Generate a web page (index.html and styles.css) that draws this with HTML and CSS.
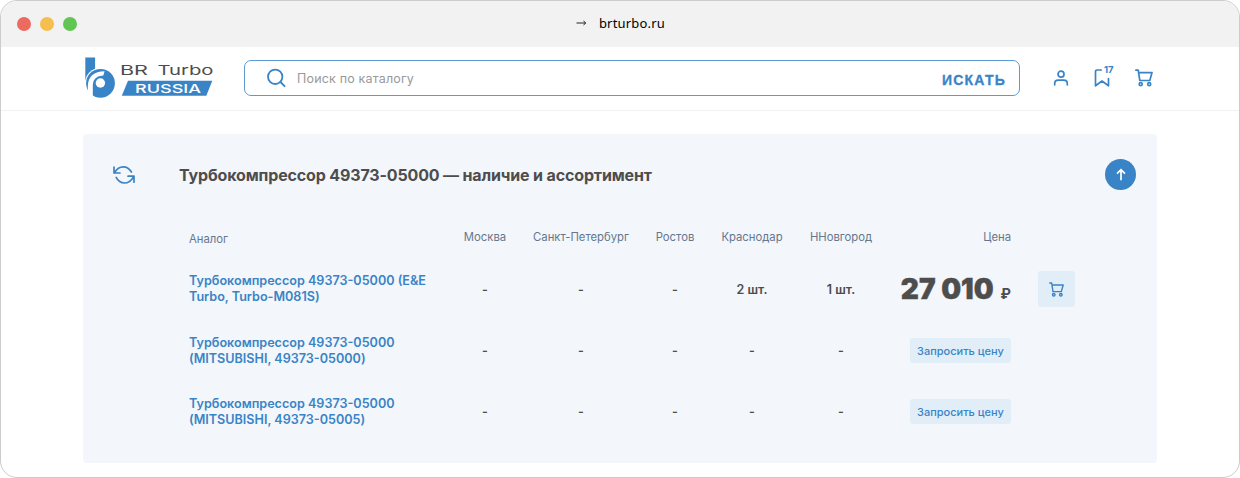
FILE: index.html
```html
<!DOCTYPE html>
<html lang="ru">
<head>
<meta charset="utf-8">
<title>BR Turbo Russia</title>
<link rel="stylesheet" href="styles.css">
</head>
<body>
<svg width="0" height="0" class="sprite" aria-hidden="true">
  <symbol id="cart" viewBox="0 0 18 18"><g fill="none" stroke="currentColor" stroke-width="1.7" stroke-linecap="round" stroke-linejoin="round"><path d="M.9 1.2h2.3l1.6 10.3h10L17 3.6H3.7"/><circle cx="5.700" cy="15.200" r="1.500"/><circle cx="14.200" cy="15.200" r="1.500"/></g></symbol>
</svg>
<div class="window">
  <div class="titlebar">
    <div class="lights"><i class="red"></i><i class="yellow"></i><i class="green"></i></div>
    <div class="address"><svg width="11" height="8" viewBox="0 0 11 8"><path d="M.5 4h9M7.500 2l2.300 2-2.300 2" fill="none" stroke="#222" stroke-width="1"/></svg><span>brturbo.ru</span></div>
  </div>
  <header class="header">
    <a class="logo">
      <svg width="130" height="42" viewBox="84 57 130 42">
        <path d="M85.300 57.500h9.800v20l-9.800 3z" fill="#3984c6"/>
        <circle cx="100.500" cy="83.300" r="15.500" fill="#fff"/>
        <circle cx="100.500" cy="83.300" r="14.400" fill="#3984c6"/>
        <path d="M87.800 98V86Q88.500 71.300 104.600 71.200L103.300 75.500Q93 76 92.800 85V98z" fill="#fff"/>
        <circle cx="100.400" cy="83" r="4.700" fill="#fff"/>
        <text class="logo-name" x="120" y="75.300" textLength="28" lengthAdjust="spacingAndGlyphs">BR</text>
        <text class="logo-name" x="157.500" y="75.300" textLength="56" lengthAdjust="spacingAndGlyphs">Turbo</text>
        <path d="M128 80.700h84.300l-6 15h-84.500z" fill="#3984c6"/>
        <text class="logo-country" x="135" y="92.900" textLength="66" lengthAdjust="spacingAndGlyphs">RUSSIA</text>
      </svg>
    </a>
    <div class="search">
      <svg width="20" height="20" viewBox="0 0 20 20"><g fill="none" stroke="#3984c6" stroke-width="1.800" stroke-linecap="round"><circle cx="8.200" cy="8.800" r="7.200"/><path d="M13.400 14l4.200 4.200"/></g></svg>
      <span class="placeholder">Поиск по каталогу</span>
      <span class="submit">ИСКАТЬ</span>
    </div>
    <nav class="actions">
      <svg class="user" width="16" height="16" viewBox="0 0 16 16"><g fill="none" stroke="currentColor" stroke-width="1.700" stroke-linecap="round"><circle cx="8" cy="4.200" r="3"/><path d="M1.700 14.800v-1.200q0-3.400 3.500-3.400h5.600q3.500 0 3.500 3.400v1.200"/></g></svg>
      <span class="saved"><svg width="16" height="18" viewBox="0 0 16 18"><path d="M7.200 1H3.200Q1.500 1 1.500 2.700V16.800L8 12l6.500 4.800V9.500" fill="none" stroke="currentColor" stroke-width="1.700" stroke-linecap="round" stroke-linejoin="round"/></svg><b>17</b></span>
      <svg class="cart" width="18" height="18"><use href="#cart"/></svg>
    </nav>
  </header>
  <main class="card">
    <div class="card-head">
      <svg width="22" height="20" viewBox="0 0 22 20"><g fill="none" stroke="#3984c6" stroke-width="1.700" stroke-linecap="round" stroke-linejoin="round"><path d="M1 2.200V8h6M1.500 7.500Q5 1.800 10.300 1.800Q15.500 1.800 18.400 7M21 17.200v-6h-6M20.500 11.800Q17 18 11.500 18Q6 18 3.200 12.400"/></g></svg>
      <h1>Турбокомпрессор 49373-05000 — наличие и ассортимент</h1>
      <span class="up"><svg width="12" height="14" viewBox="0 0 12 14"><path d="M6 12.300V2.200M2 5.600l4-3.900 4 3.900" fill="none" stroke="#fff" stroke-width="1.700"/></svg></span>
    </div>
    <div class="table">
      <div class="row head"><span class="first">Аналог</span><span>Москва</span><span>Санкт-Петербург</span><span>Ростов</span><span>Краснодар</span><span>ННовгород</span><span class="price">Цена</span></div>
      <div class="row"><a>Турбокомпрессор 49373-05000 (E&amp;E<br>Turbo, Turbo-M081S)</a><span>-</span><span>-</span><span>-</span><span>2 шт.</span><span>1 шт.</span><div class="price amount"><strong>27 010</strong><em>₽</em></div><div class="buy"><svg width="15" height="15"><use href="#cart"/></svg></div></div>
      <div class="row alt"><a>Турбокомпрессор 49373-05000<br>(MITSUBISHI, 49373-05000)</a><span>-</span><span>-</span><span>-</span><span>-</span><span>-</span><div class="price"><button>Запросить цену</button></div></div>
      <div class="row"><a>Турбокомпрессор 49373-05000<br>(MITSUBISHI, 49373-05005)</a><span>-</span><span>-</span><span>-</span><span>-</span><span>-</span><div class="price"><button>Запросить цену</button></div></div>
    </div>
  </main>
</div>
</body>
</html>
```
FILE: styles.css
```css
* { box-sizing: border-box; }
body { margin: 0; background: #fff; font-family: Inter, "Noto Sans", sans-serif; color: #4d4d4d; }
svg { display: block; flex: none; }
.sprite { display: none; }
.window { width: 1240px; height: 478px; border: 1px solid #ccc; border-radius: 17px; overflow: hidden; background: #fff; }
.titlebar { height: 46px; background: #f2f2f2; display: grid; grid-template-columns: 1fr auto 1fr; align-items: center; padding-left: 16px; }
.lights { display: flex; gap: 9px; padding-bottom: 1px; }
.lights i { width: 14px; height: 14px; border-radius: 50%; }
.red { background: #ed6a5e; }
.yellow { background: #f4bf4f; }
.green { background: #61c554; }
.address { display: flex; align-items: center; gap: 12px; font: 13px "Noto Sans", sans-serif; letter-spacing: .2px; color: #000; margin-right: 15px; padding-bottom: 2px; }
.header { height: 64px; border-bottom: 1px solid #f0f1f3; display: flex; align-items: center; padding-left: 83px; }
.logo { width: 160px; margin-bottom: 1px; }
.logo-name { font: 400 13.500px Inter, sans-serif; fill: #4d4d4d; }
.logo-country { font: 500 12px Inter, sans-serif; fill: #fff; }
.search { width: 776px; height: 36px; border: 1px solid #5c9bd2; border-radius: 7px; display: flex; align-items: center; padding: 0 14px 0 22px; margin-bottom: 1px; }
.placeholder { font-size: 12.500px; letter-spacing: .18px; color: #999; margin-left: 10px; flex: 1; }
.submit { font: 700 14px "Liberation Sans", sans-serif; letter-spacing: 1.200px; color: #3984c6; -webkit-text-stroke: .3px #3984c6; margin-top: 3px; margin-right: -1px; }
.actions { display: flex; align-items: center; color: #3984c6; margin-left: 33px; }
.user { margin-top: -1px; }
.saved { display: flex; margin-left: 25px; width: 41px; position: relative; }
.saved svg { margin-top: -1px; }
.saved b { position: absolute; left: 10px; top: -6px; font-size: 9.500px; line-height: 11px; }
.cart { margin-top: -2px; }
.card { margin: 23px 0 0 82px; width: 1074px; height: 329px; background: #f3f6fb; border-radius: 4px; }
.card-head { display: flex; align-items: center; padding: 24px 21px 0 30px; height: 57px; }
h1 { margin: 0 0 0 44px; flex: 1; font-size: 16px; line-height: 20px; font-weight: 700; letter-spacing: -.150px; white-space: nowrap; }
.up { width: 31px; height: 31px; border-radius: 50%; background: #3984c6; display: grid; place-items: center; }
.table { margin: 32px 69px 0 95px; }
.row { display: grid; grid-template-columns: 265px 84px 108px 80px 74px 104px 118px 76px; align-items: center; height: 62px; text-align: center; font-size: 12.500px; font-weight: 600; }
.row.head { height: 35px; align-items: start; font-size: 11.300px; font-weight: 400; line-height: 28px; color: #66768d; }
.row.alt, .alt + .row { height: 61px; }
.row a, .first { text-align: left; padding-left: 11px; }
.head .first { line-height: 32px; }
.row a { color: #3984c6; font-size: 12.600px; line-height: 16px; white-space: nowrap; }
.alt { background: #f3f6fa; }
.price { display: flex; justify-content: flex-end; }
.amount { align-items: baseline; gap: 7px; }
.amount strong { font-size: 28px; font-weight: 900; line-height: 36px; white-space: nowrap; -webkit-text-stroke: .4px #4d4d4d; }
.amount em { font-style: normal; font-weight: 700; font-size: 14px; }
.buy { width: 37px; height: 36px; margin-left: 27px; border-radius: 3px; background: #e1eef7; color: #3984c6; display: grid; place-items: center; }
button { border: 0; border-radius: 3px; background: #e1eef7; color: #3984c6; font: 500 11px Inter, sans-serif; width: 101px; height: 25px; padding: 0; white-space: nowrap; }
```
